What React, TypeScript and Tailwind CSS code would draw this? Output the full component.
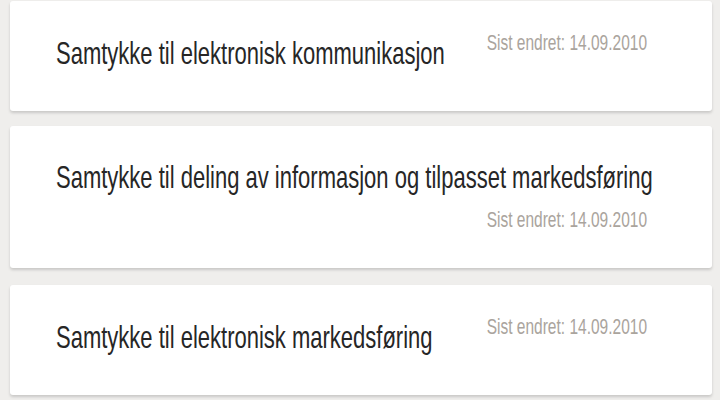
import React from 'react';

interface ConsentCardProps {
  title: string;
  changed: string;
  stacked?: boolean;
  className?: string;
}

// Titles and dates are drawn a bit taller than wide, as in the screenshot
const Title: React.FC<{ children: React.ReactNode; className?: string }> = ({ children, className }) => (
  <span
    className={`inline-block origin-center scale-y-[1.41] text-[22px] leading-[31px] text-[#262626] whitespace-nowrap ${className ?? ''}`}
  >
    {children}
  </span>
);

const Changed: React.FC<{ children: React.ReactNode; className?: string }> = ({ children, className }) => (
  <span
    className={`inline-block origin-center scale-y-[1.38] text-[15.5px] leading-[19px] text-[#aaa49d] whitespace-nowrap ${className ?? ''}`}
  >
    Sist endret: {children}
  </span>
);

const ConsentCard: React.FC<ConsentCardProps> = ({ title, changed, stacked, className }) => {
  if (stacked) {
    return (
      <div className={`ml-[10px] mr-[8px] h-[142px] rounded-[3px] bg-white pl-[46px] pr-[65px] pt-[32px] shadow-[0_2px_3px_rgba(0,0,0,0.16)] flex flex-col ${className ?? ''}`}>
        <Title className="mt-[4px] self-start">{title}</Title>
        <Changed className="mt-[17px] self-end">{changed}</Changed>
      </div>
    );
  }
  return (
    <div className={`ml-[10px] mr-[8px] h-[110px] rounded-[3px] bg-white pl-[46px] pr-[65px] pt-[32px] shadow-[0_2px_3px_rgba(0,0,0,0.16)] flex items-start justify-between ${className ?? ''}`}>
      <Title className="mt-[5px]">{title}</Title>
      <Changed>{changed}</Changed>
    </div>
  );
};

const App: React.FC = () => {
  return (
    <div className="h-[400px] overflow-hidden bg-[#efeeec] pt-[1px] font-['Liberation_Sans',Arial,sans-serif]">
      <div className="flex flex-col">
        <ConsentCard title="Samtykke til elektronisk kommunikasjon" changed="14.09.2010" />
        <ConsentCard
          title="Samtykke til deling av informasjon og tilpasset markedsføring"
          changed="14.09.2010"
          stacked
          className="mt-[15px]"
        />
        <ConsentCard title="Samtykke til elektronisk markedsføring" changed="14.09.2010" className="mt-[17px]" />
      </div>
    </div>
  );
};

export default App;
